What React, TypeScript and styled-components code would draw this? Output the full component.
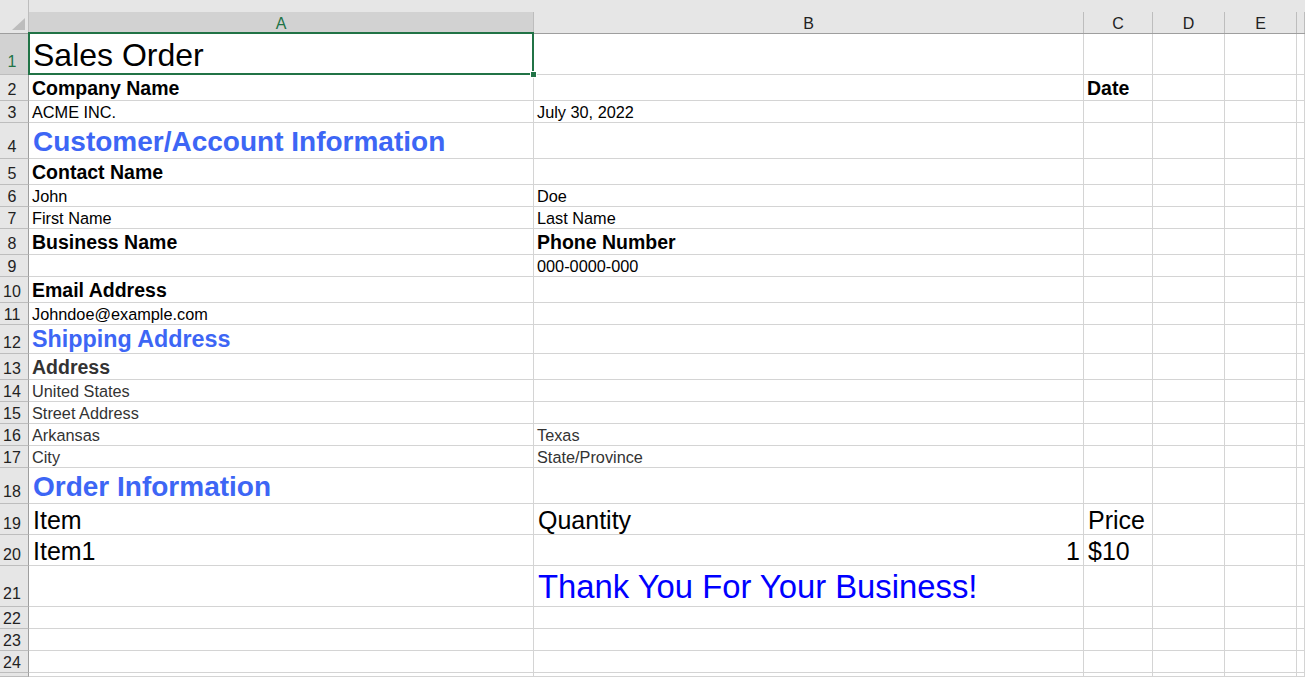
import React from "react";
import styled, { createGlobalStyle, css } from "styled-components";

const GlobalStyle = createGlobalStyle`
  html, body {
    margin: 0;
    padding: 0;
    background: #ffffff;
    overflow: hidden;
  }
  body {
    font-family: "Liberation Sans", Arial, sans-serif;
  }
  * { box-sizing: border-box; }
`;

const GREEN = "#217346";
const BLUE = "#3d66f5";
const GRID = "#d4d4d4";
const HEAD_BG = "#e6e6e6";
const HEAD_SEL = "#d2d2d2";
const HEAD_EDGE = "#9e9e9e";
const HEAD_SEP = "#bdbdbd";

type ColKey = "A" | "B" | "C" | "D" | "E" | "F";

interface CellSpec {
  text: string;
  size?: number;
  bold?: boolean;
  color?: string;
  align?: "left" | "right";
  pad?: number;
}

const COLUMNS: { key: ColKey; width: string }[] = [
  { key: "A", width: "505px" },
  { key: "B", width: "550px" },
  { key: "C", width: "69px" },
  { key: "D", width: "72px" },
  { key: "E", width: "72px" },
  { key: "F", width: "1fr" },
];

const ROW_HEIGHTS = [
  41, 26, 22, 36, 26, 22, 22, 26, 22, 26, 22, 29, 26, 22, 22, 22, 22, 36, 31,
  31, 41, 22, 22, 22,
];

const N = 16.3;
const B = 19.5;
const L = 25;
const GRAY = "#333333";

const CONTENT: Record<number, Partial<Record<ColKey, CellSpec>>> = {
  1: { A: { text: "Sales Order", size: 32, pad: 3 } },
  2: {
    A: { text: "Company Name", size: B, bold: true },
    C: { text: "Date", size: B, bold: true },
  },
  3: { A: { text: "ACME INC." }, B: { text: "July 30, 2022" } },
  4: {
    A: { text: "Customer/Account Information", size: 28, bold: true, color: BLUE },
  },
  5: { A: { text: "Contact Name", size: B, bold: true } },
  6: { A: { text: "John" }, B: { text: "Doe" } },
  7: { A: { text: "First Name" }, B: { text: "Last Name" } },
  8: {
    A: { text: "Business Name", size: B, bold: true },
    B: { text: "Phone Number", size: B, bold: true },
  },
  9: { B: { text: "000-0000-000" } },
  10: { A: { text: "Email Address", size: B, bold: true } },
  11: { A: { text: "Johndoe@example.com" } },
  12: { A: { text: "Shipping Address", size: 23.3, bold: true, color: BLUE } },
  13: { A: { text: "Address", size: B, bold: true, color: GRAY } },
  14: { A: { text: "United States", color: GRAY } },
  15: { A: { text: "Street Address", color: GRAY } },
  16: { A: { text: "Arkansas", color: GRAY }, B: { text: "Texas", color: GRAY } },
  17: { A: { text: "City", color: GRAY }, B: { text: "State/Province", color: GRAY } },
  18: { A: { text: "Order Information", size: 28, bold: true, color: BLUE } },
  19: {
    A: { text: "Item", size: L, pad: 1 },
    B: { text: "Quantity", size: L, pad: 1 },
    C: { text: "Price", size: L, pad: 1 },
  },
  20: {
    A: { text: "Item1", size: L, pad: 1 },
    B: { text: "1", size: L, align: "right", pad: 1 },
    C: { text: "$10", size: L, pad: 1 },
  },
  21: {
    B: { text: "Thank You For Your Business!", size: 32.8, color: "#0000ff" },
  },
};

const Sheet = styled.div<{ $rows: number[]; $cols: string[] }>`
  display: grid;
  grid-template-columns: 29px ${(p) => p.$cols.join(" ")};
  grid-template-rows: 34px ${(p) => p.$rows.map((h) => `${h}px`).join(" ")} 1fr;
  width: 100vw;
  height: 100vh;
  overflow: hidden;
  background: #ffffff;
`;

const Corner = styled.div`
  display: flex;
  align-items: flex-end;
  justify-content: flex-end;
  padding: 0 3px 3px 0;
  background: ${HEAD_BG};
  border-right: 1px solid ${HEAD_SEP};
  border-bottom: 1px solid ${HEAD_EDGE};
`;

const ColHeader = styled.div<{ $selected?: boolean }>`
  display: flex;
  padding-top: 12px;
  background: ${HEAD_BG};
  border-bottom: 1px solid ${(p) => (p.$selected ? GREEN : HEAD_EDGE)};
`;

const ColLabel = styled.div<{ $selected?: boolean }>`
  flex: 1;
  display: flex;
  align-items: flex-end;
  justify-content: center;
  padding-bottom: 1px;
  font-size: 16px;
  line-height: 1;
  color: ${(p) => (p.$selected ? GREEN : "#222222")};
  background: ${(p) => (p.$selected ? HEAD_SEL : HEAD_BG)};
  border-right: 1px solid ${HEAD_SEP};
`;

const RowHeader = styled.div<{ $selected?: boolean; $shift: number }>`
  display: flex;
  align-items: center;
  justify-content: center;
  padding-right: 4px;
  padding-top: ${(p) => p.$shift}px;
  font-size: 16px;
  line-height: 1;
  color: ${(p) => (p.$selected ? GREEN : "#222222")};
  background: ${(p) => (p.$selected ? HEAD_SEL : HEAD_BG)};
  border-right: 1px solid ${(p) => (p.$selected ? GREEN : HEAD_EDGE)};
  border-bottom: 1px solid ${HEAD_SEP};
`;

const Cell = styled.div<{
  $size: number;
  $bold: boolean;
  $color: string;
  $align: "left" | "right";
  $pad: number;
  $selected?: boolean;
}>`
  position: relative;
  display: flex;
  align-items: flex-end;
  justify-content: ${(p) => (p.$align === "right" ? "flex-end" : "flex-start")};
  padding: 0 3px ${(p) => p.$pad}px ${(p) => (p.$size >= 24 ? 4 : 3)}px;
  font-size: ${(p) => p.$size}px;
  font-weight: ${(p) => (p.$bold ? 700 : 400)};
  color: ${(p) => p.$color};
  line-height: 1;
  white-space: nowrap;
  overflow: visible;
  border-right: 1px solid ${GRID};
  border-bottom: 1px solid ${GRID};

  ${(p) =>
    p.$selected &&
    css`
      z-index: 2;
      &::after {
        content: "";
        position: absolute;
        left: -1px;
        top: -2px;
        right: -1px;
        bottom: -1px;
        border: 2px solid ${GREEN};
        pointer-events: none;
      }
      &::before {
        content: "";
        position: absolute;
        right: -3px;
        bottom: -3px;
        width: 5px;
        height: 5px;
        background: ${GREEN};
        box-shadow: 0 0 0 1px #ffffff;
        z-index: 3;
      }
    `}
`;

const CornerTriangle = () => (
  <svg width="13" height="12" viewBox="0 0 13 12" aria-hidden="true">
    <polygon points="0,12 13,12 13,0" fill="#bdbdbd" />
  </svg>
);

export default function App() {
  const selectedRow = 1;
  const selectedCol: ColKey = "A";

  return (
    <>
      <GlobalStyle />
      <Sheet $rows={ROW_HEIGHTS} $cols={COLUMNS.map((c) => c.width)}>
        <Corner>
          <CornerTriangle />
        </Corner>
        {COLUMNS.map((c) => (
          <ColHeader key={`h-${c.key}`} $selected={c.key === selectedCol}>
            <ColLabel $selected={c.key === selectedCol}>
              {c.key === "F" ? "" : c.key}
            </ColLabel>
          </ColHeader>
        ))}
        {ROW_HEIGHTS.map((h, i) => {
          const row = i + 1;
          const rowContent = CONTENT[row] || {};
          return (
            <React.Fragment key={`r-${row}`}>
              <RowHeader
                $selected={row === selectedRow}
                $shift={2 + Math.max(0, Math.round((h - 22) * 0.75))}
              >
                {row}
              </RowHeader>
              {COLUMNS.map((c) => {
                const spec = rowContent[c.key];
                const size = spec?.size ?? N;
                return (
                  <Cell
                    key={`${c.key}${row}`}
                    $size={size}
                    $bold={!!spec?.bold}
                    $color={spec?.color ?? "#000000"}
                    $align={spec?.align ?? "left"}
                    $pad={spec?.pad ?? (size < 17 ? 1.5 : 2)}
                    $selected={row === selectedRow && c.key === selectedCol}
                  >
                    {spec?.text ?? ""}
                  </Cell>
                );
              })}
            </React.Fragment>
          );
        })}
        <RowHeader $shift={0} />
        {COLUMNS.map((c) => (
          <Cell
            key={`${c.key}-tail`}
            $size={N}
            $bold={false}
            $color="#000000"
            $align="left"
            $pad={0}
          />
        ))}
      </Sheet>
    </>
  );
}
